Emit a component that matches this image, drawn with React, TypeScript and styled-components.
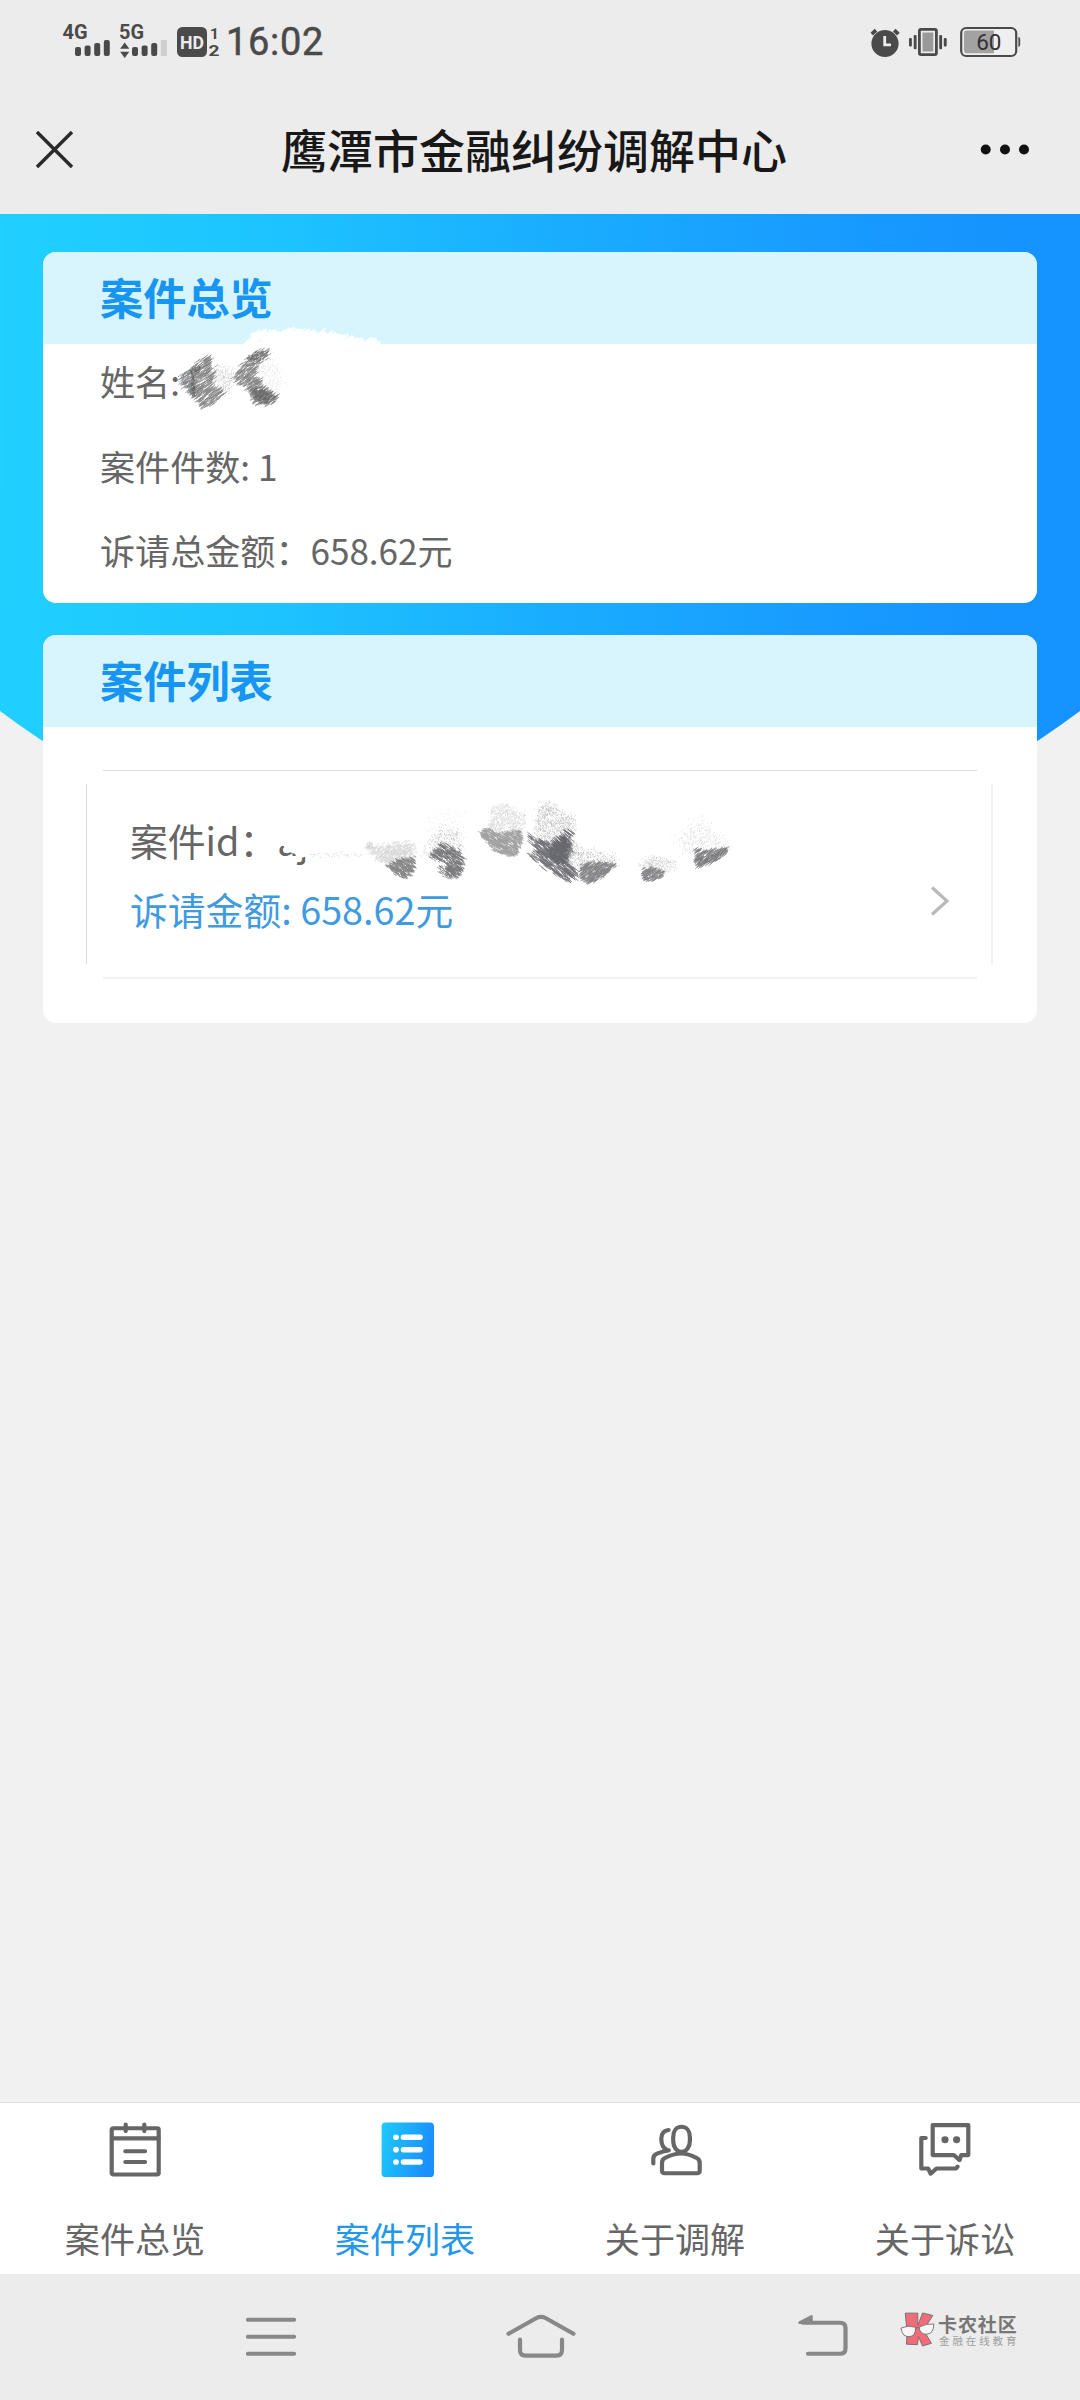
import React from 'react';
import styled, { createGlobalStyle } from 'styled-components';

const GlobalStyle = createGlobalStyle`
  * { box-sizing: border-box; }
  body {
    margin: 0;
    background: #f1f1f1;
    font-family: "Noto Sans CJK SC", sans-serif;
    color: #666;
  }
  svg { display: block; flex: none; }
`;

const Screen = styled.div`
  width: 1080px;
  height: 2400px;
  display: flex;
  flex-direction: column;
  overflow: hidden;
`;

const StatusBar = styled.header`
  height: 84px;
  padding: 20px 56px 0 60px;
  display: flex;
  align-items: flex-start;
  background: #ececec;
`;

const Clock = styled.span`
  margin-left: 2px;
  flex: 1;
  font: 400 38px/45px Roboto, sans-serif;
  letter-spacing: 0.7px;
  color: #4a4a4a;
  -webkit-text-stroke: 0.5px #4a4a4a;
`;

const TitleBar = styled.div`
  height: 130px;
  padding: 2px 50px 0 36px;
  display: grid;
  grid-template-columns: 38px 1fr 50px;
  align-items: center;
  background: #ececec;
`;

const PageTitle = styled.h1`
  margin: 0 0 5px;
  padding-left: 14px;
  text-align: center;
  font-size: 46px;
  line-height: 64px;
  font-weight: 500;
  color: #181818;
`;

const Content = styled.main`
  position: relative;
  isolation: isolate;
  flex: 1;
  padding: 38px 43px 0;
  display: flex;
  flex-direction: column;
  gap: 32px;

  &::before {
    content: '';
    position: absolute;
    z-index: -1;
    inset: 0 0 auto;
    height: 700px;
    background: linear-gradient(91deg, #20d0ff 0%, #1dc3ff 26%, #1aaeff 50%, #189dff 74%, #1593fe 92%);
    clip-path: circle(900px at 540px -223px);
  }
`;

const Card = styled.section<{ $height: number }>`
  position: relative;
  height: ${(p) => p.$height}px;
  border-radius: 13px;
  background: #fff;
  overflow: hidden;
`;

const CardTitle = styled.h2`
  margin: 0;
  height: 92px;
  padding: 0 57px;
  background: #d8f5fd;
  color: #1795f3;
  font-size: 43.2px;
  line-height: 89px;
  font-weight: 700;
`;

const Facts = styled.div`
  padding: 0 57px;
  display: flex;
  flex-direction: column;
`;

const Fact = styled.div`
  height: 84.5px;
  font-size: 35.1px;
  line-height: 74px;
  white-space: pre;
`;

const CaseItem = styled.div`
  position: relative;
  margin: 43px 44px 0 43px;
  height: 209px;
  padding: 41px 43px 0 44px;
  display: flex;
  justify-content: space-between;

  &::before, &::after {
    content: '';
    position: absolute;
    pointer-events: none;
  }
  &::before {
    inset: 0 16px 0 17px;
    border-top: 1px solid #dedede;
    border-bottom: 2px solid #f1f1f1;
  }
  &::after {
    inset: 14px 0 15px 0;
    border-left: 1px solid #dadada;
    border-right: 2px solid #f2f2f2;
  }
`;

const CaseText = styled.div<{ $accent?: boolean }>`
  height: 69px;
  font-size: 37.8px;
  line-height: 58px;
  white-space: pre;
  color: ${(p) => (p.$accent ? '#3f9be0' : '#666')};
`;

const Chevron = styled.svg`
  margin-top: 75px;
`;

const Smudge = styled.svg<{ $left: number; $top: number }>`
  position: absolute;
  left: ${(p) => p.$left}px;
  top: ${(p) => p.$top}px;
`;

const TabBar = styled.nav`
  height: 172px;
  border-top: 1px solid #dfdfdf;
  background: #fff;
  display: grid;
  grid-template-columns: repeat(4, 1fr);
`;

const Tab = styled.div<{ $active?: boolean }>`
  padding-top: 16px;
  display: flex;
  flex-direction: column;
  align-items: center;
  color: ${(p) => (p.$active ? '#2497ea' : '#666')};
  font-size: 35.1px;
  line-height: 52px;
`;

const TabIcon = styled.svg.attrs({
  width: 60,
  height: 60,
  viewBox: '0 0 60 62',
  preserveAspectRatio: 'none',
})`
  fill: none;
  stroke: #666;
  stroke-width: 4.2;
  stroke-linecap: round;
  stroke-linejoin: round;
`;

const TabLabel = styled.span`
  margin-top: 33px;
`;

const SystemNav = styled.footer`
  height: 126px;
  padding: 38px 0 0 246px;
  display: flex;
  background: #ececec;
`;

const NavIcon = styled.svg<{ $gap: number }>`
  margin-right: ${(p) => p.$gap}px;
  fill: none;
  stroke: #888;
  stroke-width: 4.2;
  stroke-linecap: round;
  stroke-linejoin: round;
`;

const BrandText = styled.div`
  padding-top: 2px;
  margin-left: 3px;
  display: flex;
  flex-direction: column;
  white-space: nowrap;
`;

const BrandName = styled.span`
  font-size: 19px;
  line-height: 20px;
  font-weight: 700;
  letter-spacing: 0.9px;
  color: #777;
`;

const BrandSub = styled.span`
  font-size: 10.5px;
  line-height: 13px;
  letter-spacing: 2.9px;
  padding-left: 1px;
  color: #a0a0a0;
`;

type Pt = [number, number];

const inside = (x: number, y: number, poly: Pt[]) => {
  let hit = false;
  for (let i = 0, j = poly.length - 1; i < poly.length; j = i++) {
    const [xi, yi] = poly[i];
    const [xj, yj] = poly[j];
    if (yi > y !== yj > y && x < ((xj - xi) * (y - yi)) / (yj - yi) + xi) hit = !hit;
  }
  return hit;
};

/** Fills a polygon with short parallel chalk strokes; `soft` scatters them past its edge. */
const hatch = (poly: Pt[], count: number, length: number, angle: number, soft: number, seed: number) => {
  let s = seed;
  const rnd = () => {
    s = (s * 1664525 + 1013904223) % 4294967296;
    return s / 4294967296;
  };
  const xs = poly.map((p) => p[0]);
  const ys = poly.map((p) => p[1]);
  const x0 = Math.min(...xs);
  const y0 = Math.min(...ys);
  const w = Math.max(...xs) - x0;
  const h = Math.max(...ys) - y0;
  const dx = Math.cos((angle * Math.PI) / 180);
  const dy = Math.sin((angle * Math.PI) / 180);
  let d = '';
  for (let i = 0; i < count; i++) {
    const px = x0 + rnd() * w;
    const py = y0 + rnd() * h;
    const l = length * (0.3 + rnd() * 0.7);
    const x = px + (rnd() + rnd() - 1) * soft;
    const y = py + (rnd() + rnd() - 1) * soft;
    if (inside(px, py, poly)) {
      d += `M${(x - (dx * l) / 2).toFixed(1)} ${(y - (dy * l) / 2).toFixed(1)}l${(dx * l).toFixed(1)} ${(dy * l).toFixed(1)}`;
    }
  }
  return d;
};

interface Patch {
  poly: Pt[];
  count: number;
  length: number;
  angle: number;
  color: string;
  width: number;
  soft?: number;
}

const Patches = ({ items }: { items: Patch[] }) => (
  <>
    {items.map((p, i) => (
      <path
        key={i}
        d={hatch(p.poly, p.count, p.length, p.angle, p.soft ?? 6, 97 + i * 7919)}
        stroke={p.color}
        strokeWidth={p.width}
        fill="none"
      />
    ))}
  </>
);

// Patch coordinates are thirds of a pixel.
const namePatches: Patch[] = [
  { poly: [[125, 165], [180, 155], [195, 200], [170, 240], [125, 210]], count: 480, length: 3, angle: -35, color: '#b5b5b5', width: 2, soft: 16 },
  { poly: [[270, 120], [315, 130], [335, 200], [320, 230], [280, 215], [255, 170]], count: 450, length: 3, angle: -35, color: '#d6d6d6', width: 2, soft: 24 },
  { poly: [[28, 190], [60, 155], [118, 122], [128, 150], [140, 160], [122, 205], [165, 235], [150, 255], [105, 280], [85, 262], [70, 240], [40, 220]], count: 1000, length: 26, angle: -35, color: '#858585', width: 2.2 },
  { poly: [[195, 180], [215, 150], [245, 120], [295, 102], [300, 115], [262, 155], [260, 180], [285, 220], [320, 245], [315, 262], [280, 273], [250, 262], [238, 225], [200, 200]], count: 1150, length: 22, angle: -33, color: '#858585', width: 2.2, soft: 8 },
  { poly: [[245, 225], [280, 220], [315, 245], [295, 260], [255, 252]], count: 260, length: 12, angle: -30, color: '#686868', width: 2.3, soft: 12 },
  { poly: [[235, 130], [270, 110], [295, 115], [270, 135], [240, 150]], count: 150, length: 12, angle: -30, color: '#6c6c6c', width: 2.3, soft: 12 },
  { poly: [[62, 160], [90, 155], [92, 170], [72, 180], [76, 245], [64, 245]], count: 170, length: 8, angle: 80, color: '#646464', width: 2.4, soft: 3 },
];

const whiteEdge: Patch[] = [
  { poly: [[226, 92], [245, 64], [262, 48], [310, 54], [370, 46], [440, 52], [490, 58], [550, 72], [622, 80], [626, 92]], count: 1500, length: 22, angle: -38, color: '#fff', width: 4, soft: 10 },
];

const idPatches: Patch[] = [
  { poly: [[300, 175], [390, 160], [430, 170], [430, 200], [340, 220], [320, 205]], count: 1000, length: 10, angle: -35, color: '#d6d6d6', width: 2, soft: 16 },
  { poly: [[290, 158], [310, 162], [305, 180], [290, 175]], count: 100, length: 5, angle: -35, color: '#cccccc', width: 2, soft: 10 },
  { poly: [[465, 110], [490, 70], [575, 65], [580, 150], [470, 155]], count: 260, length: 2.5, angle: 35, color: '#dddddd', width: 2, soft: 26 },
  { poly: [[470, 160], [510, 115], [570, 120], [580, 185], [530, 205], [460, 205]], count: 560, length: 3, angle: 35, color: '#aaaaaa', width: 2.1, soft: 18 },
  { poly: [[350, 228], [380, 210], [435, 203], [430, 245], [410, 262], [385, 258]], count: 560, length: 16, angle: 32, color: '#858585', width: 2.2, soft: 8 },
  { poly: [[512, 160], [545, 170], [580, 200], [575, 245], [555, 263], [535, 262], [505, 240], [540, 212], [500, 210], [480, 203]], count: 850, length: 18, angle: 34, color: '#77777a', width: 2.2, soft: 10 },
  { poly: [[655, 110], [665, 55], [690, 40], [765, 75], [760, 118], [700, 150]], count: 1250, length: 5, angle: -35, color: '#d3d3d3', width: 2, soft: 14 },
  { poly: [[630, 130], [655, 115], [680, 130], [755, 122], [755, 165], [738, 195], [710, 200], [668, 178]], count: 1050, length: 18, angle: 31, color: '#9f9f9f', width: 2.1 },
  { poly: [[798, 100], [808, 45], [835, 38], [915, 88], [910, 130], [880, 150], [830, 165], [790, 125]], count: 1350, length: 4, angle: 35, color: '#bababa', width: 2.1, soft: 14 },
  { poly: [[775, 135], [800, 145], [845, 160], [885, 125], [905, 125], [905, 180], [890, 220], [925, 240], [910, 268], [880, 268], [820, 230], [775, 190], [800, 190]], count: 1250, length: 25, angle: 38, color: '#717177', width: 2.3, soft: 8 },
  { poly: [[850, 165], [885, 140], [898, 155], [885, 220], [855, 218], [835, 185]], count: 600, length: 18, angle: 45, color: '#68686f', width: 3, soft: 6 },
  { poly: [[900, 150], [940, 185], [1030, 195], [1040, 215], [960, 235], [890, 225]], count: 800, length: 4, angle: -30, color: '#adadad', width: 2.1, soft: 22 },
  { poly: [[932, 222], [1000, 218], [1036, 224], [1005, 258], [960, 280], [934, 266]], count: 720, length: 18, angle: -33, color: '#86868a', width: 2.2 },
  { poly: [[1100, 228], [1140, 200], [1215, 212], [1210, 236], [1180, 248]], count: 480, length: 4, angle: -30, color: '#c4c4c4', width: 2.1, soft: 16 },
  { poly: [[1118, 238], [1140, 232], [1183, 246], [1178, 260], [1145, 275], [1120, 266]], count: 360, length: 15, angle: -30, color: '#858588', width: 2.2 },
  { poly: [[1220, 140], [1300, 80], [1318, 115], [1370, 150], [1365, 175], [1240, 195]], count: 720, length: 3, angle: -30, color: '#cdcdcd', width: 2.1, soft: 24 },
  { poly: [[1278, 172], [1300, 185], [1368, 172], [1372, 188], [1340, 212], [1282, 234], [1277, 210]], count: 480, length: 20, angle: -38, color: '#7b7b7f', width: 2.2 },
  { poly: [[120, 192], [300, 192], [300, 198], [120, 198]], count: 55, length: 4, angle: 0, color: '#cfcfcf', width: 2, soft: 8 },
];

const SignalCluster = () => (
  <svg width="164" height="44" viewBox="60 20 164 44" fill="#4a4a4a">
    <g fontFamily="Roboto, sans-serif" fontWeight="700" fontSize="20">
      <text x="62.5" y="39.4" textLength="25" lengthAdjust="spacingAndGlyphs">4G</text>
      <text x="119" y="39.4" textLength="25" lengthAdjust="spacingAndGlyphs">5G</text>
    </g>
    <rect x="75" y="47" width="6" height="9" rx="2" />
    <rect x="84.6" y="45.5" width="6" height="10.5" rx="2" />
    <rect x="94.2" y="43" width="6" height="13" rx="2" />
    <rect x="103.8" y="40" width="6" height="16" rx="2" />
    <path d="M124.7 42.5l4.6 6.2h-9.2zM124.7 58l4.6-6.2h-9.2z" />
    <rect x="132" y="47" width="6" height="9" rx="2" />
    <rect x="141.6" y="45.5" width="6" height="10.5" rx="2" />
    <rect x="151.2" y="43" width="6" height="13" rx="2" />
    <rect x="160.8" y="40" width="6" height="16" rx="1" fill="#cfcfcf" />
    <rect x="177" y="27" width="30" height="30" rx="5.5" />
    <text x="180" y="49" fontFamily="Roboto, sans-serif" fontWeight="700" fontSize="18.5" fill="#ececec" textLength="24" lengthAdjust="spacingAndGlyphs">HD</text>
    <g fontFamily="Roboto, sans-serif" fontWeight="700">
      <text x="210" y="38.5" fontSize="15.5">1</text>
      <text x="208.5" y="56" fontSize="15.5" textLength="11" lengthAdjust="spacingAndGlyphs">2</text>
    </g>
  </svg>
);

const DeviceCluster = () => (
  <svg width="156" height="44" viewBox="868 20 156 44" fill="#4a4a4a">
    <circle cx="885" cy="43.5" r="13.6" />
    <path d="M884.7 36v8.8h6.3" fill="none" stroke="#ececec" strokeWidth="2.8" />
    <path d="M871.8 34.2l4.2-4M898.4 34.2l-4.2-4" stroke="#4a4a4a" strokeWidth="3.8" />
    <rect x="919.4" y="29.4" width="17" height="25.2" rx="1.5" fill="#ececec" stroke="#4a4a4a" strokeWidth="2.8" />
    <rect x="922.5" y="32.5" width="10.8" height="19" fill="#999" />
    <rect x="909" y="38" width="2.9" height="8.4" rx="1" />
    <rect x="913.7" y="35" width="2.9" height="14.2" rx="1" />
    <rect x="939.2" y="35" width="2.9" height="14.2" rx="1" />
    <rect x="943.8" y="38" width="2.9" height="8.4" rx="1" />
    <rect x="961.2" y="28" width="55" height="28" rx="5" fill="#efefef" stroke="#4a4a4a" strokeWidth="2.2" />
    <path d="M964 33q0-2.4 2.4-2.4H994v22.6h-27.6q-2.4 0-2.4-2.4z" fill="#a2a2a2" />
    <path d="M1018.4 37q1.8 0 1.8 2.4v5.2q0 2.4-1.8 2.4z" />
    <text x="976.2" y="50" fontFamily="Roboto, sans-serif" fontSize="22.5" fill="#333">60</text>
  </svg>
);

const OverviewIcon = () => (
  <TabIcon>
    <rect x="6.7" y="9.6" width="47" height="47.8" rx="1.5" />
    <path d="M7 20H53.500M20.700 5.600V12.500M39.300 5.600V12.500M20.300 33.300H40M20.300 44.400H40" />
  </TabIcon>
);

const ListIcon = () => (
  <TabIcon>
    <defs>
      <linearGradient id="tab-list" x1="0" y1="0" x2="1" y2="0.25">
        <stop offset="0" stopColor="#1fcbfb" />
        <stop offset="1" stopColor="#1a90fd" />
      </linearGradient>
    </defs>
    <rect x="6.600" y="3.600" width="52.400" height="56.400" rx="4" fill="url(#tab-list)" stroke="none" />
    {[18.9, 31.7, 44.4].map((y) => (
      <g key={y} stroke="#fff" strokeWidth="5.600">
        <path d={`M28.500 ${y}H45`} />
        <circle cx="21" cy={y} r="2.900" fill="#fff" stroke="none" />
      </g>
    ))}
  </TabIcon>
);

const MediationIcon = () => (
  <TabIcon>
    <path d="M36.500 8C41.700 8 44.900 12.500 44.900 18.500V22.500C44.900 29 41.500 33.800 36.500 33.800S28.200 29 28.200 22.500V18.500C28.200 12.500 31.300 8 36.500 8Z" />
    <path d="M17 53.500V45.500Q17 41.500 20.500 40Q28.500 35.600 36 35.600T51 40Q54.700 41.500 54.700 45.500V53.500Q54.700 56 52 56H19.700Q17 56 17 53.500Z" />
    <path d="M23.600 11.400C18.500 12 16.300 15.500 16.300 20.500C16.300 25.500 17.500 30 22 31.800M23.800 32.400C18.500 32.800 15 34.600 12 35.800Q8.300 37.500 8.300 41V46" />
  </TabIcon>
);

const LawsuitIcon = () => (
  <TabIcon>
    <path d="M18 6.300H53.300V37.300H46.200L44.600 42.500L38.800 37.300H17.700V6.300Z" />
    <path d="M10.700 19.600H6.300V51.200H13.200L15.600 56.500L21.500 51.200H41L42.600 49.200" />
    <circle cx="30" cy="21.400" r="3.600" fill="#666" stroke="none" />
    <circle cx="41.600" cy="21.400" r="3.600" fill="#666" stroke="none" />
  </TabIcon>
);

const BrandMark = () => (
  <svg width="35" height="36" viewBox="0 0 35 38" preserveAspectRatio="none" stroke="#6b6b6b" strokeWidth="0.9" strokeLinejoin="round">
    <path d="M5.200 1.200H17.800V14L22.600 1L32.800 3.600L26 15L24 20L31.500 33L22.500 36L18.500 26L17.500 34.500L6.500 34L7 20Z" fill="#f06c78" />
    <path d="M0.800 17Q8 13.500 15.500 16Q16 26 9 26Q2.500 26 1.500 19Z" fill="#f7f7f7" />
    <path d="M19 16Q26 12 33.800 12.600Q34 23 26.500 23.500Q20 23.500 19 16Z" fill="#f7f7f7" />
    <path d="M15.500 17L19 16.300" fill="none" />
  </svg>
);

export default function App() {
  return (
    <>
      <GlobalStyle />
      <Screen>
        <StatusBar>
          <SignalCluster />
          <Clock>16:02</Clock>
          <DeviceCluster />
        </StatusBar>
        <TitleBar>
          <svg width="38" height="38" viewBox="0 0 38 38" stroke="#2a2a2a" strokeWidth="3.4">
            <path d="M1 1L36 36M36 1L1 36" />
          </svg>
          <PageTitle>鹰潭市金融纠纷调解中心</PageTitle>
          <svg width="50" height="12" viewBox="0 0 50 12" fill="#111">
            <circle cx="5.700" cy="5.500" r="5" />
            <circle cx="25" cy="5.500" r="5" />
            <circle cx="44" cy="5.500" r="5" />
          </svg>
        </TitleBar>

        <Content>
          <Card $height={351}>
            <CardTitle>案件总览</CardTitle>
            <Facts>
              <Fact>姓名:</Fact>
              <Fact>案件件数: 1</Fact>
              <Fact>诉请总金额：658.62元</Fact>
            </Facts>
            <Smudge $left={127} $top={63} width="220" height="110" viewBox="0 0 660 330">
              <Patches items={whiteEdge} />
              <Patches items={namePatches} />
            </Smudge>
          </Card>

          <Card $height={388}>
            <CardTitle>案件列表</CardTitle>
            <CaseItem>
              <div>
                <CaseText>案件id：aj</CaseText>
                <CaseText $accent>诉请金额: 658.62元</CaseText>
              </div>
              <Chevron width="20" height="30" viewBox="0 0 20 30" fill="none" stroke="#b9b9b9" strokeWidth="3.2">
                <path d="M2 1.500L17 15L2 28.500" />
              </Chevron>
            </CaseItem>
            <Smudge $left={227} $top={155} width="470" height="110" viewBox="0 0 1410 330">
              <path d="M20 90H140V212H106V200L84 206L76 192L58 186L50 178L40 168L20 164Z" fill="#fff" />
              <Patches items={idPatches} />
            </Smudge>
          </Card>
        </Content>

        <TabBar>
          <Tab>
            <OverviewIcon />
            <TabLabel>案件总览</TabLabel>
          </Tab>
          <Tab $active>
            <ListIcon />
            <TabLabel>案件列表</TabLabel>
          </Tab>
          <Tab>
            <MediationIcon />
            <TabLabel>关于调解</TabLabel>
          </Tab>
          <Tab>
            <LawsuitIcon />
            <TabLabel>关于诉讼</TabLabel>
          </Tab>
        </TabBar>

        <SystemNav>
          <NavIcon $gap={210} width="50" height="48.500" viewBox="0 0 50 50" preserveAspectRatio="none">
            <path d="M2 8H48M2 25.500H48M2 43H48" />
          </NavIcon>
          <NavIcon $gap={222} width="70" height="48.500" viewBox="0 0 70 50" preserveAspectRatio="none">
            <path d="M2.500 22.500L30.500 6.200Q35 3.800 39.500 6.200L67.500 22.500M14 28.500V39.500Q14 45 19.500 45H50.500Q56 45 56 39.500V28.500" />
          </NavIcon>
          <NavIcon $gap={52} width="50" height="48.500" viewBox="0 0 50 50" preserveAspectRatio="none">
            <path d="M5 11H42Q47.500 11 47.500 16.500V37.500Q47.500 43 42 43H10" />
            <path d="M1.500 11L13.500 4.500V11Z" fill="#888" strokeWidth="2.500" />
          </NavIcon>
          <BrandMark />
          <BrandText>
            <BrandName>卡农社区</BrandName>
            <BrandSub>金融在线教育</BrandSub>
          </BrandText>
        </SystemNav>
      </Screen>
    </>
  );
}
